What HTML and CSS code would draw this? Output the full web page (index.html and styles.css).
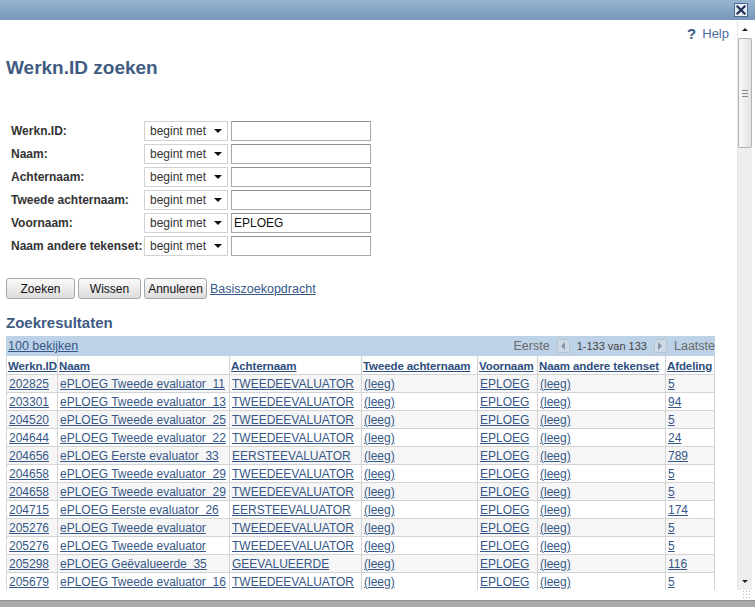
FILE: index.html
```html
<!DOCTYPE html>
<html lang="nl">
<head>
<meta charset="utf-8">
<title>Werkn.ID zoeken</title>
<link rel="stylesheet" href="styles.css">
</head>
<body>
<div class="window">
  <div class="titlebar">
    <span class="close" aria-label="Sluiten">
      <svg width="14" height="14" viewBox="0 0 14 14"><rect x="0.5" y="0.5" width="13" height="13" fill="#e6edf5" stroke="#4d6a93"/><path d="M3.5 3.5 L10.5 10.5 M10.5 3.5 L3.5 10.5" stroke="#1f3358" stroke-width="2.2" stroke-linecap="square"/></svg>
    </span>
  </div>
  <div class="main">
    <div class="content">
      <div class="helprow"><a class="help" href="#"><span class="q">?</span><span class="helptext">Help</span></a></div>
      <h1 class="title">Werkn.ID zoeken</h1>

      <div class="form">
        <div class="label">Werkn.ID:</div>
        <div class="select"><span>begint met</span><span class="caret"></span></div>
        <div class="input"></div>

        <div class="label">Naam:</div>
        <div class="select"><span>begint met</span><span class="caret"></span></div>
        <div class="input"></div>

        <div class="label">Achternaam:</div>
        <div class="select"><span>begint met</span><span class="caret"></span></div>
        <div class="input"></div>

        <div class="label">Tweede achternaam:</div>
        <div class="select"><span>begint met</span><span class="caret"></span></div>
        <div class="input"></div>

        <div class="label">Voornaam:</div>
        <div class="select"><span>begint met</span><span class="caret"></span></div>
        <div class="input">EPLOEG</div>

        <div class="label">Naam andere tekenset:</div>
        <div class="select"><span>begint met</span><span class="caret"></span></div>
        <div class="input"></div>
      </div>

      <div class="buttons">
        <span class="btn btn-zoeken">Zoeken</span>
        <span class="btn btn-small">Wissen</span>
        <span class="btn btn-small">Annuleren</span>
        <a class="link basic" href="#">Basiszoekopdracht</a>
      </div>

      <h2 class="subtitle">Zoekresultaten</h2>

      <div class="grid">
        <div class="gridbar">
          <a class="link" href="#">100 bekijken</a>
          <div class="pager">
            <span class="pg-word">Eerste</span>
            <span class="pg-btn"><span class="tri-left"></span></span>
            <span class="pg-count">1-133 van 133</span>
            <span class="pg-btn"><span class="tri-right"></span></span>
            <span class="pg-word">Laatste</span>
          </div>
        </div>
        <table class="results">
          <colgroup>
            <col class="c1"><col class="c2"><col class="c3"><col class="c4"><col class="c5"><col class="c6"><col class="c7">
          </colgroup>
          <thead>
            <tr>
              <th><a href="#">Werkn.ID</a></th>
              <th><a href="#">Naam</a></th>
              <th><a href="#">Achternaam</a></th>
              <th><a href="#">Tweede achternaam</a></th>
              <th><a href="#">Voornaam</a></th>
              <th><a href="#">Naam andere tekenset</a></th>
              <th><a href="#">Afdeling</a></th>
            </tr>
          </thead>
          <tbody>
            <tr><td><a href="#">202825</a></td><td><a href="#">ePLOEG Tweede evaluator&nbsp; 11</a></td><td><a href="#">TWEEDEEVALUATOR</a></td><td><a href="#">(leeg)</a></td><td><a href="#">EPLOEG</a></td><td><a href="#">(leeg)</a></td><td><a href="#">5</a></td></tr>
            <tr><td><a href="#">203301</a></td><td><a href="#">ePLOEG Tweede evaluator&nbsp; 13</a></td><td><a href="#">TWEEDEEVALUATOR</a></td><td><a href="#">(leeg)</a></td><td><a href="#">EPLOEG</a></td><td><a href="#">(leeg)</a></td><td><a href="#">94</a></td></tr>
            <tr><td><a href="#">204520</a></td><td><a href="#">ePLOEG Tweede evaluator&nbsp; 25</a></td><td><a href="#">TWEEDEEVALUATOR</a></td><td><a href="#">(leeg)</a></td><td><a href="#">EPLOEG</a></td><td><a href="#">(leeg)</a></td><td><a href="#">5</a></td></tr>
            <tr><td><a href="#">204644</a></td><td><a href="#">ePLOEG Tweede evaluator&nbsp; 22</a></td><td><a href="#">TWEEDEEVALUATOR</a></td><td><a href="#">(leeg)</a></td><td><a href="#">EPLOEG</a></td><td><a href="#">(leeg)</a></td><td><a href="#">24</a></td></tr>
            <tr><td><a href="#">204656</a></td><td><a href="#">ePLOEG Eerste evaluator&nbsp; 33</a></td><td><a href="#">EERSTEEVALUATOR</a></td><td><a href="#">(leeg)</a></td><td><a href="#">EPLOEG</a></td><td><a href="#">(leeg)</a></td><td><a href="#">789</a></td></tr>
            <tr><td><a href="#">204658</a></td><td><a href="#">ePLOEG Tweede evaluator&nbsp; 29</a></td><td><a href="#">TWEEDEEVALUATOR</a></td><td><a href="#">(leeg)</a></td><td><a href="#">EPLOEG</a></td><td><a href="#">(leeg)</a></td><td><a href="#">5</a></td></tr>
            <tr><td><a href="#">204658</a></td><td><a href="#">ePLOEG Tweede evaluator&nbsp; 29</a></td><td><a href="#">TWEEDEEVALUATOR</a></td><td><a href="#">(leeg)</a></td><td><a href="#">EPLOEG</a></td><td><a href="#">(leeg)</a></td><td><a href="#">5</a></td></tr>
            <tr><td><a href="#">204715</a></td><td><a href="#">ePLOEG Eerste evaluator&nbsp; 26</a></td><td><a href="#">EERSTEEVALUATOR</a></td><td><a href="#">(leeg)</a></td><td><a href="#">EPLOEG</a></td><td><a href="#">(leeg)</a></td><td><a href="#">174</a></td></tr>
            <tr><td><a href="#">205276</a></td><td><a href="#">ePLOEG Tweede evaluator</a></td><td><a href="#">TWEEDEEVALUATOR</a></td><td><a href="#">(leeg)</a></td><td><a href="#">EPLOEG</a></td><td><a href="#">(leeg)</a></td><td><a href="#">5</a></td></tr>
            <tr><td><a href="#">205276</a></td><td><a href="#">ePLOEG Tweede evaluator</a></td><td><a href="#">TWEEDEEVALUATOR</a></td><td><a href="#">(leeg)</a></td><td><a href="#">EPLOEG</a></td><td><a href="#">(leeg)</a></td><td><a href="#">5</a></td></tr>
            <tr><td><a href="#">205298</a></td><td><a href="#">ePLOEG Geëvalueerde&nbsp; 35</a></td><td><a href="#">GEEVALUEERDE</a></td><td><a href="#">(leeg)</a></td><td><a href="#">EPLOEG</a></td><td><a href="#">(leeg)</a></td><td><a href="#">116</a></td></tr>
            <tr><td><a href="#">205679</a></td><td><a href="#">ePLOEG Tweede evaluator&nbsp; 16</a></td><td><a href="#">TWEEDEEVALUATOR</a></td><td><a href="#">(leeg)</a></td><td><a href="#">EPLOEG</a></td><td><a href="#">(leeg)</a></td><td><a href="#">5</a></td></tr>
          </tbody>
        </table>
      </div>
    </div>
    <div class="scrollbar">
      <div class="sb-btn"><span class="sb-up"></span></div>
      <div class="sb-thumb"><span class="grip"></span></div>
      <div class="sb-track"></div>
      <div class="sb-btn sb-btn-down"><span class="sb-down"></span></div>
    </div>
  </div>
  <div class="bottomstrip"><span class="resize"></span></div>
  <div class="footer"></div>
</div>
</body>
</html>
```
FILE: styles.css
```css
html, body {
  margin: 0;
  padding: 0;
  background: #ffffff;
}
body {
  font-family: "Liberation Sans", Arial, sans-serif;
  font-size: 12px;
  color: #333333;
}
.window {
  width: 755px;
  height: 607px;
  display: flex;
  flex-direction: column;
  overflow: hidden;
  background: #ffffff;
}
.titlebar {
  height: 20px;
  flex: none;
  background: linear-gradient(#98b4d0, #7796bb);
  display: flex;
  justify-content: flex-end;
  align-items: center;
  padding-right: 7px;
}
.close {
  display: block;
  width: 14px;
  height: 14px;
}
.close svg { display: block; }
.main {
  height: 570px;
  flex: none;
  display: flex;
}
.content {
  flex: 1;
  min-width: 0;
  overflow: hidden;
  padding: 0 8px 0 6px;
}
.helprow {
  margin-top: 4px;
  height: 18px;
  display: flex;
  justify-content: flex-end;
  align-items: center;
}
.help {
  display: flex;
  align-items: center;
  text-decoration: none;
}
.q {
  font-size: 15px;
  font-weight: bold;
  color: #3a5683;
  margin-right: 6px;
}
.helptext {
  font-size: 13px;
  color: #4d6b9a;
}
.title {
  margin: 15px 0 0 0;
  font-size: 19px;
  line-height: 22px;
  font-weight: bold;
  color: #3f5b83;
}
.form {
  margin: 42px 0 0 5px;
  display: grid;
  grid-template-columns: 130px 84px 140px;
  column-gap: 3px;
  row-gap: 3px;
}
.label {
  font-weight: bold;
  color: #333333;
  line-height: 20px;
  white-space: nowrap;
}
.select {
  box-sizing: border-box;
  height: 20px;
  border: 1px solid #d2d2d2;
  background: #ffffff;
  display: flex;
  align-items: center;
  justify-content: space-between;
  padding: 0 5px 0 5px;
  color: #333333;
}
.caret {
  width: 0;
  height: 0;
  border-left: 4px solid transparent;
  border-right: 4px solid transparent;
  border-top: 4px solid #111111;
}
.input {
  box-sizing: border-box;
  height: 20px;
  border: 1px solid #a9a9a9;
  border-top-color: #8f8f8f;
  background: #ffffff;
  padding: 0 2px;
  line-height: 18px;
  color: #111111;
}
.buttons {
  margin-top: 22px;
  display: flex;
  align-items: center;
  gap: 3px;
}
.btn {
  box-sizing: border-box;
  height: 21px;
  border: 1px solid #a3a8ae;
  border-radius: 3px;
  background: linear-gradient(#fbfbfb, #dcdcdc);
  color: #111111;
  display: flex;
  align-items: center;
  justify-content: center;
}
.btn-zoeken { width: 69px; }
.btn-small { width: 63px; }
.link, .results a {
  color: #355888;
  text-decoration: underline;
}
.basic {
  font-size: 12.5px;
}
.subtitle {
  margin: 15px 0 0 0;
  font-size: 15px;
  line-height: 18px;
  font-weight: bold;
  color: #3f5b83;
}
.grid {
  margin-top: 4px;
  width: 709px;
}
.gridbar {
  height: 20px;
  background: #bdd1e7;
  display: flex;
  justify-content: space-between;
  align-items: center;
  padding-left: 2px;
  font-size: 12.5px;
}
.pager {
  display: flex;
  align-items: center;
  gap: 7px;
}
.pg-word {
  color: #6b6b6b;
}
.pg-count {
  font-size: 11px;
  color: #444444;
}
.pg-btn {
  box-sizing: border-box;
  width: 13px;
  height: 14px;
  background: #cfdae6;
  border: 1px solid #b6c4d4;
  display: flex;
  align-items: center;
  justify-content: center;
}
.tri-left {
  width: 0; height: 0;
  border-top: 4px solid transparent;
  border-bottom: 4px solid transparent;
  border-right: 4px solid #8394a8;
}
.tri-right {
  width: 0; height: 0;
  border-top: 4px solid transparent;
  border-bottom: 4px solid transparent;
  border-left: 4px solid #8394a8;
}
.results {
  width: 709px;
  table-layout: fixed;
  border-collapse: separate;
  border-spacing: 0;
  border-left: 1px solid #d4d4d4;
}
.results col.c1 { width: 51px; }
.results col.c2 { width: 172px; }
.results col.c3 { width: 132px; }
.results col.c4 { width: 116px; }
.results col.c5 { width: 60px; }
.results col.c6 { width: 128px; }
.results col.c7 { width: 49px; }
.results th, .results td {
  padding: 0 0 0 2px;
  border-right: 1px solid #d4d4d4;
  border-bottom: 1px solid #d4d4d4;
  text-align: left;
  white-space: nowrap;
  overflow: hidden;
}
.results th {
  padding: 2px 0 0 1px;
  line-height: 16px;
  font-size: 11.5px;
  letter-spacing: -0.1px;
  font-weight: bold;
  background: #ffffff;
}
.results th a { color: #2e4e80; }
.results td {
  padding-top: 1px;
  line-height: 16px;
  background: #f6f6f6;
}
.results tbody tr:nth-child(even) td {
  background: #ffffff;
}
.scrollbar {
  width: 15px;
  margin-right: 3px;
  flex: none;
  display: flex;
  flex-direction: column;
  background: #eeeeee;
  border-left: 1px solid #e6e6e6;
  box-sizing: border-box;
}
.sb-btn {
  height: 18px;
  flex: none;
  display: flex;
  align-items: center;
  justify-content: center;
  background: #ffffff;
}
.sb-btn-down {
  background: #eeeeee;
}
.sb-up {
  width: 0; height: 0;
  border-left: 3px solid transparent;
  border-right: 3px solid transparent;
  border-bottom: 3px solid #222222;
}
.sb-down {
  width: 0; height: 0;
  border-left: 3px solid transparent;
  border-right: 3px solid transparent;
  border-top: 3px solid #222222;
}
.sb-thumb {
  height: 110px;
  flex: none;
  box-sizing: border-box;
  border: 1px solid #b3b3b3;
  border-radius: 2px;
  background: linear-gradient(90deg, #f8f8f8, #e2e2e2);
  display: flex;
  align-items: center;
  justify-content: center;
}
.grip {
  width: 6px;
  height: 7px;
  background: repeating-linear-gradient(#8a8a8a 0, #8a8a8a 1px, transparent 1px, transparent 3px);
}
.sb-track {
  flex: 1;
}
.bottomstrip {
  height: 10px;
  flex: none;
  display: flex;
  justify-content: flex-end;
  padding-right: 3px;
}
.resize {
  width: 10px;
  height: 8px;
  background: radial-gradient(circle, #b0b0b0 0.8px, transparent 1px) 0 0 / 3px 3px;
}
.footer {
  height: 6px;
  flex: none;
  background: #a9a9a9;
  border-top: 1px solid #8e8e8e;
}
```
